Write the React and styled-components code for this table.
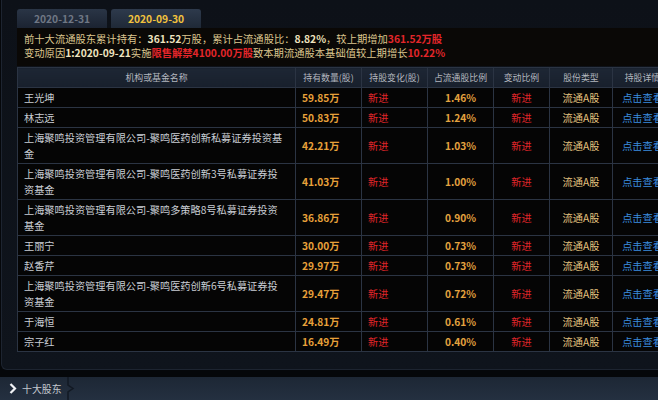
import React from "react";
import styled, { createGlobalStyle } from "styled-components";

const GlobalStyle = createGlobalStyle`
  html, body {
    margin: 0;
    padding: 0;
    background: #05070a;
  }
  body {
    font-family: "Noto Sans CJK SC", "Noto Sans", sans-serif;
    overflow: hidden;
  }
`;

const Screen = styled.div`
  width: 658px;
  height: 400px;
  display: flex;
  flex-direction: column;
  overflow: hidden;
  background: #05070a;
`;

const Panel = styled.div`
  height: 370px;
  box-sizing: border-box;
  margin-left: 1px;
  border-left: 1px solid #1d2430;
  border-bottom: 1px solid #1d2430;
  border-radius: 0 0 0 6px;
  background: linear-gradient(#0d1118, #0f141c);
  padding: 9px 0 0 15px;
  overflow: hidden;
`;

const Tabs = styled.div`
  display: flex;
  gap: 4px;
  height: 19px;
`;

const Tab = styled.div`
  width: 90px;
  height: 19px;
  border-radius: 3px 3px 0 0;
  background: ${(p) =>
    p.$active
      ? "linear-gradient(#2e3a4c, #1f2937)"
      : "linear-gradient(#2a3546, #1b2331)"};
  color: ${(p) => (p.$active ? "#f2c23e" : "#6f7784")};
  font-size: 10.3px;
  font-weight: 700;
  line-height: 19px;
  text-align: center;
`;

const Info = styled.div`
  background: #0a0806;
  padding: 4px 7px 6px;
  font-size: 10.3px;
  line-height: 14px;
  color: #dcc68f;
  white-space: nowrap;
`;

const Strong = styled.span`
  color: #efe3bf;
  font-weight: 700;
`;

const Red = styled.span`
  color: #e3262a;
  font-weight: 700;
`;

const Table = styled.table`
  border-collapse: collapse;
  table-layout: fixed;
  width: 655px;
  margin-top: 1px;
  background: #050505;
`;

const HeadCell = styled.th`
  height: 19px;
  padding: 0;
  border: 1px solid #2b3443;
  background: linear-gradient(#1d2634, #18202c);
  color: #b3b7bf;
  font-size: 8.9px;
  font-weight: 400;
  line-height: 19px;
  text-align: center;
  white-space: nowrap;
  overflow: hidden;
`;

const tones = {
  name: "#c9cdd4",
  qty: "#e8a13a",
  red: "#e0262a",
  pct: "#e3a23f",
  type: "#e4c27f",
  link: "#3b8cde",
};

const Cell = styled.td`
  padding: 1.5px ${(p) => (p.$align === "left" ? "6px" : "2px")};
  border: 1px solid #2b3443;
  color: ${(p) => tones[p.$tone]};
  font-size: 10.2px;
  font-weight: ${(p) => (p.$bold ? 700 : 400)};
  line-height: 16px;
  text-align: ${(p) => p.$align || "center"};
  white-space: pre-line;
  vertical-align: middle;
  overflow: hidden;
`;

const BottomBar = styled.div`
  margin-top: 7px;
  height: 23px;
  display: flex;
  align-items: center;
  background: linear-gradient(#1d2735, #243040);
`;

const BarTab = styled.div`
  display: flex;
  align-items: center;
  gap: 5px;
  height: 100%;
  padding: 0 0 0 9px;
  color: #c3c7ce;
  font-size: 9.9px;
`;

const columns = [
  { title: "机构或基金名称", width: 278 },
  { title: "持有数量(股)", width: 66 },
  { title: "持股变化(股)", width: 66 },
  { title: "占流通股比例", width: 66 },
  { title: "变动比例", width: 56 },
  { title: "股份类型", width: 63 },
  { title: "持股详情", width: 60 },
];

const rows = [
  { name: "王光坤", qty: "59.85万", pct: "1.46%" },
  { name: "林志远", qty: "50.83万", pct: "1.24%" },
  {
    name: "上海聚鸣投资管理有限公司-聚鸣医药创新私募证券投资基\n金",
    qty: "42.21万",
    pct: "1.03%",
  },
  {
    name: "上海聚鸣投资管理有限公司-聚鸣医药创新3号私募证券投\n资基金",
    qty: "41.03万",
    pct: "1.00%",
  },
  {
    name: "上海聚鸣投资管理有限公司-聚鸣多策略8号私募证券投资\n基金",
    qty: "36.86万",
    pct: "0.90%",
  },
  { name: "王丽宁", qty: "30.00万", pct: "0.73%" },
  { name: "赵香芹", qty: "29.97万", pct: "0.73%" },
  {
    name: "上海聚鸣投资管理有限公司-聚鸣医药创新6号私募证券投\n资基金",
    qty: "29.47万",
    pct: "0.72%",
  },
  { name: "于海恒", qty: "24.81万", pct: "0.61%" },
  { name: "宗子红", qty: "16.49万", pct: "0.40%" },
];

const App = () => {
  return (
    <Screen>
      <GlobalStyle />
      <Panel>
        <Tabs>
          <Tab>2020-12-31</Tab>
          <Tab $active>2020-09-30</Tab>
        </Tabs>
        <Info>
          <div>
            前十大流通股东累计持有：<Strong>361.52</Strong>万股，累计占流通股比：
            <Strong>8.82%</Strong>，较上期增加<Red>361.52万股</Red>
          </div>
          <div>
            变动原因<Strong>1:2020-09-21</Strong>实施<Red>限售解禁4100.00万股</Red>
            致本期流通股本基础值较上期增长<Red>10.22%</Red>
          </div>
        </Info>
        <Table>
          <colgroup>
            {columns.map((c) => (
              <col key={c.title} style={{ width: c.width }} />
            ))}
          </colgroup>
          <thead>
            <tr>
              {columns.map((c) => (
                <HeadCell key={c.title}>{c.title}</HeadCell>
              ))}
            </tr>
          </thead>
          <tbody>
            {rows.map((r) => (
              <tr key={r.name}>
                <Cell $align="left" $tone="name">
                  {r.name}
                </Cell>
                <Cell $align="left" $tone="qty" $bold>
                  {r.qty}
                </Cell>
                <Cell $align="left" $tone="red">
                  新进
                </Cell>
                <Cell $tone="pct" $bold>
                  {r.pct}
                </Cell>
                <Cell $tone="red">新进</Cell>
                <Cell $tone="type">流通A股</Cell>
                <Cell $tone="link">点击查看</Cell>
              </tr>
            ))}
          </tbody>
        </Table>
      </Panel>
      <BottomBar>
        <BarTab>
          <svg width="8" height="11" viewBox="0 0 8 11">
            <path d="M1.5 1 L6 5.5 L1.5 10" fill="none" stroke="#f0f2f5" strokeWidth="2.2" />
          </svg>
          十大股东
          <svg width="8" height="23" viewBox="0 0 8 23">
            <path d="M1 0 L1 8 L6 11.5 L1 15 L1 23" fill="none" stroke="#121923" strokeWidth="1.5" />
          </svg>
        </BarTab>
      </BottomBar>
    </Screen>
  );
};

export default App;
